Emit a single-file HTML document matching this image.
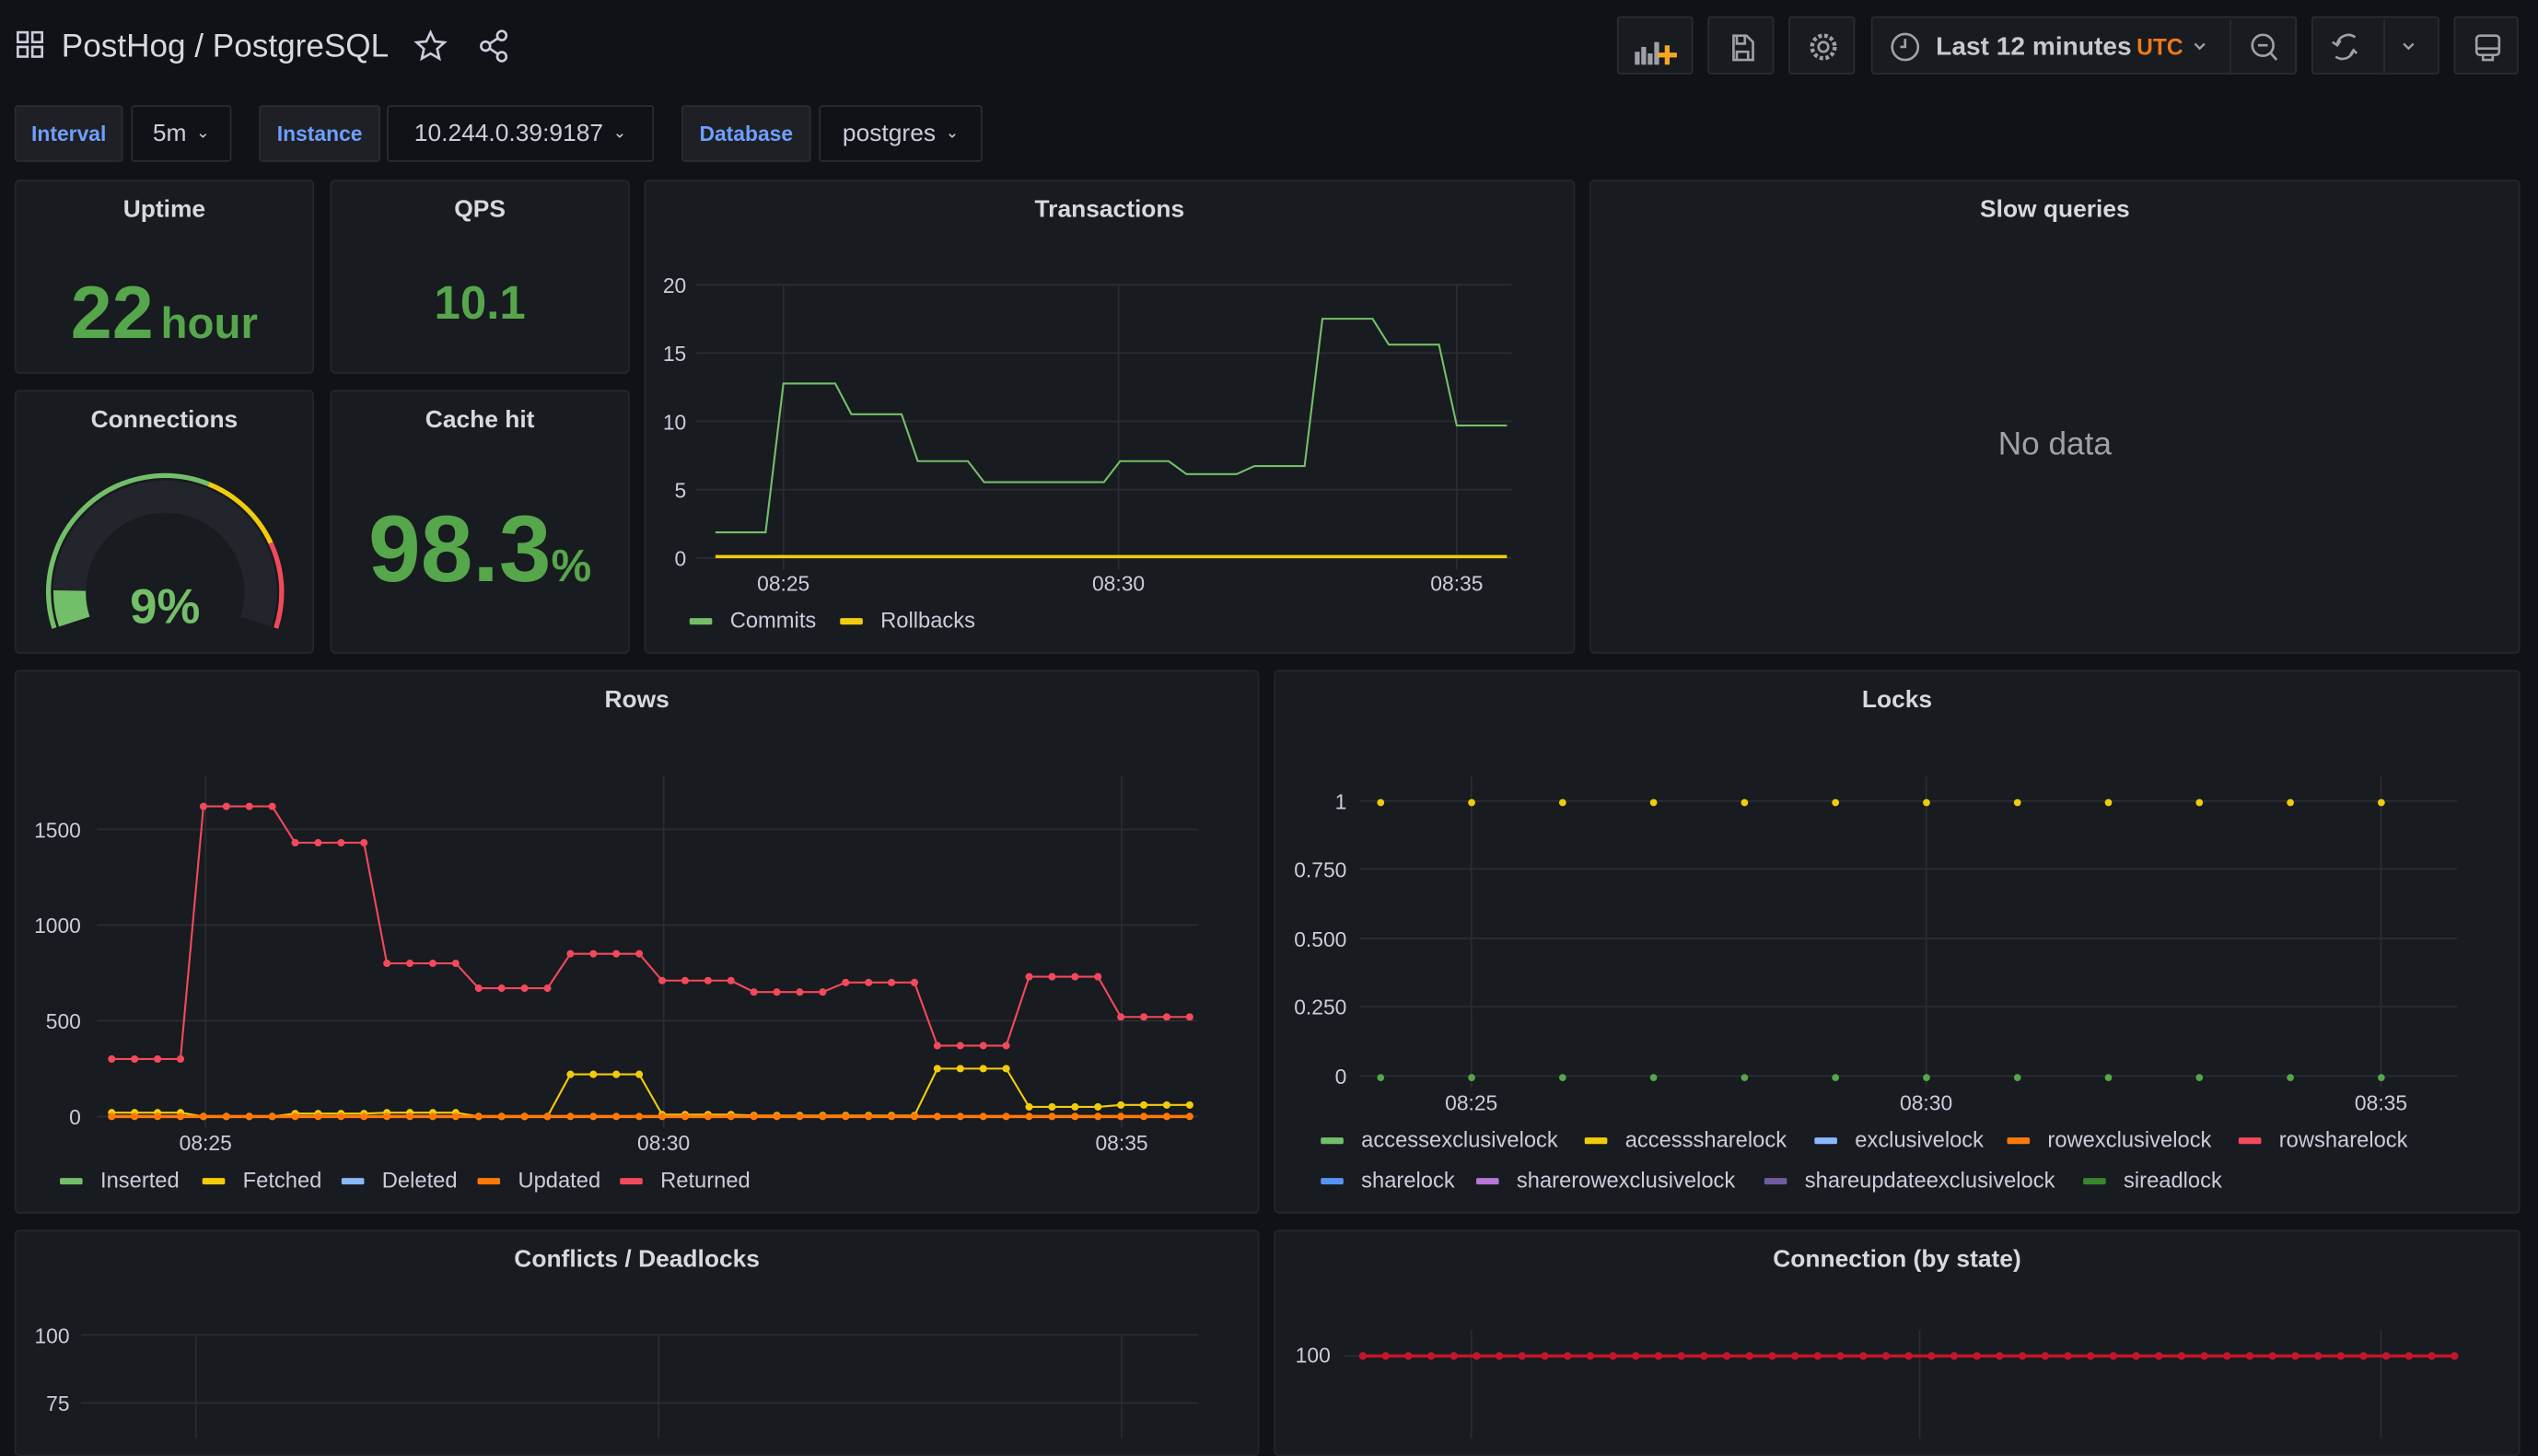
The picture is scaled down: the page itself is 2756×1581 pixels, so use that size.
<!DOCTYPE html>
<html><head><meta charset="utf-8">
<style>
html,body{margin:0;padding:0;background:#111217;width:2756px;height:1562px;overflow:hidden}
#s{position:absolute;left:0;top:0;width:1568px;height:889px;transform:scale(1.75766,1.7570);transform-origin:0 0;font-family:"Liberation Sans",sans-serif;color:#ccccdc}
.p{position:absolute;background:#181b1f;border:1px solid #24262c;border-radius:3px;box-sizing:border-box}
.t{position:absolute;left:0;right:0;top:9px;text-align:center;font-size:15px;font-weight:bold;color:#d8d9e0}
.b{position:absolute;background:#181b1f;border:1px solid #2a2c32;border-radius:2px;box-sizing:border-box;font-size:15px;display:flex;align-items:center;justify-content:center}
.lab{color:#6e9fff;font-weight:bold;font-size:13px;background:#1e2025}
svg{position:absolute;left:0;top:0;overflow:visible}
.ax{font-size:13px;fill:#ccccdc;font-family:"Liberation Sans",sans-serif}
.lg{font-size:13.5px;fill:#ccccdc;font-family:"Liberation Sans",sans-serif}
</style></head><body><div id="s">
<svg width="1568" height="889" style="z-index:0">
<g fill="none" stroke="#ccccdc" stroke-width="1.5">
<rect x="11" y="20" width="6" height="6"/><rect x="20" y="20" width="6" height="6"/><rect x="11" y="29" width="6" height="6"/><rect x="20" y="29" width="6" height="6"/>
<path d="M266 20 l2.6 5.6 6 .6-4.5 4 1.3 6-5.4-3.1-5.4 3.1 1.3-6-4.5-4 6-.6z"/>
<circle cx="310" cy="22" r="2.8"/><circle cx="300" cy="28.5" r="2.8"/><circle cx="310" cy="35" r="2.8"/><path d="M302.5 27 l5-3.3 M302.5 30 l5 3.3"/>
</g>
<text x="38" y="35" font-size="20" fill="#d8d9e0" font-family="Liberation Sans">PostHog  / PostgreSQL</text>
</svg>
<div class="b" style="left:999px;top:10px;width:47px;height:36px"><svg width="47" height="36"><g fill="#9fa1a8"><rect x="10" y="21" width="3" height="8"/><rect x="14" y="18" width="3" height="11"/><rect x="18" y="22" width="3" height="7"/><rect x="22" y="15" width="3" height="14"/></g><path d="M30 17v12M24 23h12" stroke="#f5a623" stroke-width="3"/></svg></div>
<div class="b" style="left:1055px;top:10px;width:41px;height:36px"><svg width="41" height="36"><path d="M15 11h8l4 4v11h-12z M17 11v5h5v-5 M17 26v-5h7v5" fill="none" stroke="#9fa1a8" stroke-width="1.5"/></svg></div>
<div class="b" style="left:1105px;top:10px;width:41px;height:36px"><svg width="41" height="36"><circle cx="20.5" cy="18" r="3" fill="none" stroke="#9fa1a8" stroke-width="1.5"/><circle cx="20.5" cy="18" r="7" fill="none" stroke="#9fa1a8" stroke-width="2.5" stroke-dasharray="2.2 1.5"/></svg></div>
<div class="b" style="left:1156px;top:10px;width:263px;height:36px;justify-content:flex-start"><svg width="263" height="36"><circle cx="20" cy="18" r="8" fill="none" stroke="#9fa1a8" stroke-width="1.5"/><path d="M20 13v5h-3" fill="none" stroke="#9fa1a8" stroke-width="1.5"/><text x="39" y="23" font-size="16" font-weight="bold" fill="#c7c8d0" font-family="Liberation Sans">Last 12 minutes</text><text x="163" y="23" font-size="14" font-weight="bold" fill="#eb7b18" font-family="Liberation Sans">UTC</text><path d="M199 16l3 3 3-3" fill="none" stroke="#9fa1a8" stroke-width="1.3"/><line x1="221" y1="1" x2="221" y2="35" stroke="#2a2c32"/><circle cx="241" cy="17" r="6.5" fill="none" stroke="#9fa1a8" stroke-width="1.5"/><path d="M238 17h6M246 22l3.5 4" stroke="#9fa1a8" stroke-width="1.5"/></svg></div>
<div class="b" style="left:1428px;top:10px;width:79px;height:36px"><svg width="79" height="36"><path d="M26 12a7 7 0 0 0-11 4M14 24a7 7 0 0 0 11-4 M12 15l3 2 2-3 M27 22l-2-2-2 3" fill="none" stroke="#9fa1a8" stroke-width="1.5"/><line x1="44" y1="1" x2="44" y2="35" stroke="#2a2c32"/><path d="M56 16l3 3 3-3" fill="none" stroke="#9fa1a8" stroke-width="1.3"/></svg></div>
<div class="b" style="left:1516px;top:10px;width:40px;height:36px"><svg width="40" height="36"><rect x="13" y="11" width="14" height="12" rx="2" fill="none" stroke="#9fa1a8" stroke-width="1.5"/><path d="M13 19h14 M17 23v3h6v-3" fill="none" stroke="#9fa1a8" stroke-width="1.5"/></svg></div>
<div class="b lab" style="left:9px;top:65px;width:67px;height:35px">Interval</div>
<div class="b" style="left:81px;top:65px;width:62px;height:35px;background:#111217">5m <span style="font-size:10px;margin-left:6px">⌄</span></div>
<div class="b lab" style="left:160px;top:65px;width:75px;height:35px">Instance</div>
<div class="b" style="left:239px;top:65px;width:165px;height:35px;background:#111217">10.244.0.39:9187 <span style="font-size:10px;margin-left:6px">⌄</span></div>
<div class="b lab" style="left:421px;top:65px;width:80px;height:35px">Database</div>
<div class="b" style="left:506px;top:65px;width:101px;height:35px;background:#111217">postgres <span style="font-size:10px;margin-left:6px">⌄</span></div>
<div class="p" style="left:9px;top:111px;width:185px;height:120px"><div class="t">Uptime</div>
<div style="position:absolute;left:0;right:0;top:54px;text-align:center;color:#56a64b;font-weight:bold"><span style="font-size:46px">22</span> <span style="font-size:27px">hour</span></div></div>
<div class="p" style="left:204px;top:111px;width:185px;height:120px"><div class="t">QPS</div>
<div style="position:absolute;left:0;right:0;top:60px;text-align:center;color:#56a64b;font-weight:bold;font-size:29px">10.1</div></div>
<div class="p" style="left:9px;top:241px;width:185px;height:163px"><div class="t">Connections</div>
<svg width="185" height="163">
<path d="M23.5 146.2 A72 72 0 0 1 119 57.2" fill="none" stroke="#73bf69" stroke-width="3"/>
<path d="M119 57.2 A72 72 0 0 1 157.3 93.6" fill="none" stroke="#f2cc0c" stroke-width="3"/>
<path d="M157.3 93.6 A72 72 0 0 1 160.5 146.2" fill="none" stroke="#f2495c" stroke-width="3"/>
<path d="M35.9 142.2 A59 59 0 1 1 148.1 142.2" fill="none" stroke="#22252b" stroke-width="20"/>
<path d="M35.9 142.2 A59 59 0 0 1 33 123" fill="none" stroke="#73bf69" stroke-width="20"/>
<text x="92" y="143" text-anchor="middle" font-size="30" font-weight="bold" fill="#73bf69" font-family="Liberation Sans">9%</text>
</svg></div>
<div class="p" style="left:204px;top:241px;width:185px;height:163px"><div class="t">Cache hit</div>
<div style="position:absolute;left:0;right:0;top:64px;text-align:center;color:#56a64b;font-weight:bold"><span style="font-size:58px">98.3</span><span style="font-size:28px">%</span></div></div>
<div class="p" style="left:398px;top:111px;width:575px;height:293px"><div class="t">Transactions</div></div>
<div class="p" style="left:982px;top:111px;width:575px;height:293px"><div class="t">Slow queries</div>
<div style="position:absolute;left:0;right:0;top:152px;text-align:center;font-size:20px;color:#a0a1a8">No data</div></div>
<div class="p" style="left:9px;top:414px;width:769px;height:336px"><div class="t">Rows</div></div>
<div class="p" style="left:787px;top:414px;width:770px;height:336px"><div class="t">Locks</div></div>
<div class="p" style="left:9px;top:760px;width:769px;height:140px"><div class="t">Conflicts / Deadlocks</div></div>
<div class="p" style="left:787px;top:760px;width:770px;height:140px"><div class="t">Connection (by state)</div></div>
<svg id="c" width="1568" height="889"></svg>
</div>
<script>
var h='';
function L(x1,y1,x2,y2){h+='<line x1="'+x1+'" y1="'+y1+'" x2="'+x2+'" y2="'+y2+'" stroke="#2a2c31" stroke-width="1"/>';}
function T(x,y,s,a,c){h+='<text class="'+(c||'ax')+'" x="'+x+'" y="'+y+'" text-anchor="'+(a||'start')+'">'+s+'</text>';}
function PL(p,c,w){h+='<polyline points="'+p.map(function(q){return q[0]+','+q[1]}).join(' ')+'" fill="none" stroke="'+c+'" stroke-width="'+(w||1.2)+'"/>';}
function D(p,c,r){p.forEach(function(q){h+='<circle cx="'+q[0]+'" cy="'+q[1]+'" r="'+(r||2.3)+'" fill="'+c+'"/>';});}
function LG(y,items){items.forEach(function(it){var x=it[2];h+='<rect x="'+(x-25)+'" y="'+(y-7)+'" width="14" height="4" rx="1" fill="'+it[1]+'"/>';T(x,y-1,it[0],'start','lg');});}
[20,15,10,5,0].forEach(function(v,i){var y=176+i*42.2;L(430,y,934,y);T(424,y+5,v,'end');});
[[484,'08:25'],[691,'08:30'],[900,'08:35']].forEach(function(a){L(a[0],176,a[0],352);T(a[0],365,a[1],'middle');});
PL([[442,329],[473,329],[484,237],[516,237],[526,256],[557,256],[567,285],[598,285],[608,298],[682,298],[692,285],[722,285],[733,293],[764,293],[775,288],[806,288],[817,197],[848,197],[858,213],[889,213],[900,263],[931,263]],'#73bf69');
PL([[442,344],[931,344]],'#f2cc0c',2);
LG(389,[['Commits','#73bf69',451],['Rollbacks','#f2cc0c',544]]);
function ry(v){return 690-v*0.1183;}
[1500,1000,500,0].forEach(function(v){var y=ry(v);L(60,y,740,y);T(50,y+5,v,'end');});
[[127,'08:25'],[410,'08:30'],[693,'08:35']].forEach(function(a){L(a[0],480,a[0],697);T(a[0],711,a[1],'middle');});
var R=[300,1620,1430,800,670,850,710,650,700,370,730,520],F=[20,0,15,20,0,220,10,5,5,250,50,60];
var rp=[],fp=[],up=[];for(var i=0;i<48;i++){var x=69+i*14.17;rp.push([x,ry(R[i>>2])]);fp.push([x,ry(F[i>>2])]);up.push([x,690]);}
PL(fp,'#f2cc0c');D(fp,'#f2cc0c');PL(up,'#ff780a',2);D(up,'#ff780a');PL(rp,'#f2495c');D(rp,'#f2495c');
LG(735,[['Inserted','#73bf69',62],['Fetched','#f2cc0c',150],['Deleted','#8ab8ff',236],['Updated','#ff780a',320],['Returned','#f2495c',408]]);
[['1',495],['0.750',537],['0.500',580],['0.250',622],['0',665]].forEach(function(a){L(840,a[1],1518,a[1]);T(832,a[1]+5,a[0],'end');});
[[909,'08:25'],[1190,'08:30'],[1471,'08:35']].forEach(function(a){L(a[0],480,a[0],672);T(a[0],686,a[1],'middle');});
var ly=[],lg=[];for(i=0;i<12;i++){ly.push([853+i*56.2,496]);lg.push([853+i*56.2,666]);}
D(ly,'#f2cc0c',2.2);D(lg,'#56a64b',2.2);
LG(710,[['accessexclusivelock','#73bf69',841],['accesssharelock','#f2cc0c',1004],['exclusivelock','#8ab8ff',1146],['rowexclusivelock','#ff780a',1265],['rowsharelock','#f2495c',1408]]);
LG(735,[['sharelock','#5794f2',841],['sharerowexclusivelock','#b877d9',937],['shareupdateexclusivelock','#705da0',1115],['sireadlock','#37872d',1312]]);
[['100',825],['75',867]].forEach(function(a){L(50,a[1],740,a[1]);T(43,a[1]+5,a[0],'end');});
[121,407,693].forEach(function(x){L(x,826,x,889);});
L(830,838,1518,838);T(822,842,'100','end');
[909,1186,1471].forEach(function(x){L(x,822,x,889);});
var cp=[];for(i=0;i<49;i++)cp.push([842+i*14.05,838]);PL(cp,'#c4162a',2);D(cp,'#c4162a',2.4);
document.getElementById('c').innerHTML=h;
</script>
</body></html>
